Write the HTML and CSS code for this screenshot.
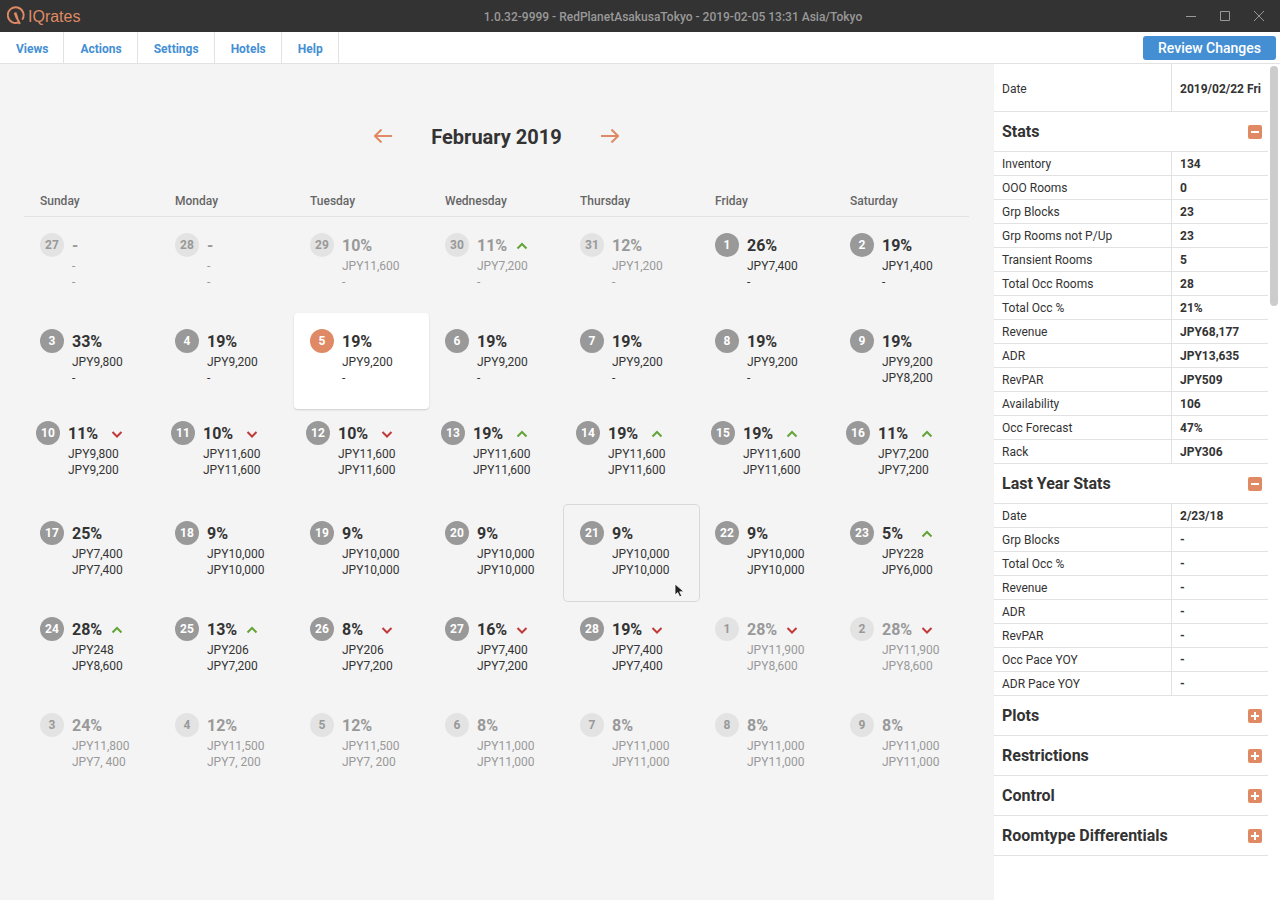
FILE: index.html
```html
<!DOCTYPE html>
<html lang="en">
<head>
<meta charset="utf-8">
<title>IQrates</title>
<link rel="stylesheet" href="styles.css">
</head>
<body>
<header class="titlebar">
  <div class="brand">
    <svg width="18" height="20" viewBox="0 0 18 20" fill="none" stroke="currentColor" aria-hidden="true"><path d="M12.200 16.200A7.900 7.900 0 1 1 15.200 13.600" stroke-width="1.900"/><path d="M8 6.500l2 5.500" stroke-width="2.600"/><path d="M9.700 11.500l3.200 6.500" stroke-width="2"/></svg>
    <span>IQrates</span>
  </div>
  <h1 class="window-title">1.0.32-9999 - RedPlanetAsakusaTokyo - 2019-02-05 13:31 Asia/Tokyo</h1>
  <div class="window-buttons">
    <button type="button" aria-label="Minimize"><svg width="10" height="10" viewBox="0 0 10 10"><path d="M0 5.500h10"/></svg></button>
    <button type="button" aria-label="Maximize"><svg width="10" height="10" viewBox="0 0 10 10"><path d="M.5.5h9v9h-9z"/></svg></button>
    <button type="button" aria-label="Close"><svg width="10" height="10" viewBox="0 0 10 10"><path d="M0 0l10 10M10 0L0 10"/></svg></button>
  </div>
</header>
<nav class="menubar">
  <a href="#views">Views</a><a href="#actions">Actions</a><a href="#settings">Settings</a><a href="#hotels">Hotels</a><a href="#help">Help</a>
  <button type="button" class="review">Review Changes</button>
</nav>
<div class="layout">
  <main class="calendar-pane">
    <div class="month-nav">
      <button type="button" aria-label="Previous month"><svg width="18" height="14" viewBox="0 0 18 14"><path d="M18 7H1M7.500.5L1 7l6.500 6.500"/></svg></button>
      <h2>February 2019</h2>
      <button type="button" aria-label="Next month"><svg width="18" height="14" viewBox="0 0 18 14"><path d="M0 7h17M10.500.5L17 7l-6.500 6.500"/></svg></button>
    </div>
    <table class="calendar">
      <thead><tr><th>Sunday</th><th>Monday</th><th>Tuesday</th><th>Wednesday</th><th>Thursday</th><th>Friday</th><th>Saturday</th></tr></thead>
      <tbody id="weeks"></tbody>
    </table>
  </main>
  <aside class="sidebar">
    <div class="details">
      <table class="stats date-row"><tr><th>Date</th><td>2019/02/22 Fri</td></tr></table>
      <h3>Stats <button type="button" class="toggle minus" aria-label="Collapse Stats"></button></h3>
      <table class="stats">
        <tr><th>Inventory</th><td>134</td></tr>
        <tr><th>OOO Rooms</th><td>0</td></tr>
        <tr><th>Grp Blocks</th><td>23</td></tr>
        <tr><th>Grp Rooms not P/Up</th><td>23</td></tr>
        <tr><th>Transient Rooms</th><td>5</td></tr>
        <tr><th>Total Occ Rooms</th><td>28</td></tr>
        <tr><th>Total Occ %</th><td>21%</td></tr>
        <tr><th>Revenue</th><td>JPY68,177</td></tr>
        <tr><th>ADR</th><td>JPY13,635</td></tr>
        <tr><th>RevPAR</th><td>JPY509</td></tr>
        <tr><th>Availability</th><td>106</td></tr>
        <tr><th>Occ Forecast</th><td>47%</td></tr>
        <tr><th>Rack</th><td>JPY306</td></tr>
      </table>
      <h3>Last Year Stats <button type="button" class="toggle minus" aria-label="Collapse Last Year Stats"></button></h3>
      <table class="stats">
        <tr><th>Date</th><td>2/23/18</td></tr>
        <tr><th>Grp Blocks</th><td>-</td></tr>
        <tr><th>Total Occ %</th><td>-</td></tr>
        <tr><th>Revenue</th><td>-</td></tr>
        <tr><th>ADR</th><td>-</td></tr>
        <tr><th>RevPAR</th><td>-</td></tr>
        <tr><th>Occ Pace YOY</th><td>-</td></tr>
        <tr><th>ADR Pace YOY</th><td>-</td></tr>
      </table>
      <h3>Plots <button type="button" class="toggle plus" aria-label="Expand Plots"></button></h3>
      <h3>Restrictions <button type="button" class="toggle plus" aria-label="Expand Restrictions"></button></h3>
      <h3>Control <button type="button" class="toggle plus" aria-label="Expand Control"></button></h3>
      <h3>Roomtype Differentials <button type="button" class="toggle plus" aria-label="Expand Roomtype Differentials"></button></h3>
    </div>
    <div class="scroll-track"><div class="scroll-thumb"></div></div>
  </aside>
</div>
<script src="calendar.js"></script>
</body>
</html>
```
FILE: styles.css
```css
* { box-sizing: border-box; }
body {
  margin: 0;
  min-height: 100vh;
  display: flex;
  flex-direction: column;
  font: 12px/16px Roboto, sans-serif;
  color: #333;
  background: #f4f4f4;
}
button { font: inherit; color: inherit; border: 0; padding: 0; background: none; }
h1, h2, h3 { margin: 0; }

.titlebar {
  height: 32px;
  display: grid;
  grid-template-columns: 1fr auto 1fr;
  align-items: center;
  background: #333;
  color: #999;
}
.brand {
  display: flex;
  align-items: center;
  gap: 3px;
  padding-left: 7px;
  color: #df8a64;
  font: 16px/20px "Liberation Sans", sans-serif;
}
.brand span { padding-top: 2px; }
.window-title { padding: 2px 0 0 66px; font-size: 12px; line-height: 16px; font-weight: 500; }
.window-buttons { display: flex; justify-content: flex-end; gap: 24px; padding-right: 16px; }
.window-buttons button { display: flex; }
.window-buttons svg { fill: none; stroke: #999; stroke-width: 1; }

.menubar {
  height: 32px;
  display: flex;
  align-items: stretch;
  background: #fff;
  border-bottom: 1px solid #e2e2e2;
}
.menubar a {
  display: flex;
  align-items: center;
  padding: 2px 15px 0 16px;
  border-right: 1px solid #e2e2e2;
  color: #448fd4;
  font-weight: 700;
  text-decoration: none;
}
.review {
  margin: 4px 4px 3px auto;
  padding: 0 15px;
  border-radius: 3px;
  background: #448fd4;
  color: #fff;
  font-size: 14px;
  font-weight: 500;
}

.layout { flex: 1; display: flex; }
.calendar-pane { flex: 1; min-width: 0; padding: 56px 25px 24px 24px; }
.month-nav { display: flex; justify-content: center; align-items: center; gap: 39px; height: 32px; }
.month-nav h2 { font-size: 20px; line-height: 24px; font-weight: 700; padding-top: 2px; }
.month-nav button { display: flex; }
.month-nav svg { fill: none; stroke: #df8a64; stroke-width: 2; }

.calendar { width: 100%; margin-top: 32px; table-layout: fixed; border-collapse: separate; border-spacing: 0; }
.calendar th {
  height: 33px;
  padding: 2px 16px 0;
  border-bottom: 1px solid #e2e2e2;
  color: #666;
  font-weight: 500;
  text-align: left;
}
.calendar td { height: 96px; padding: 0; }
.day {
  width: 100%;
  height: 96px;
  display: grid;
  grid-template-columns: 24px 32px 1fr;
  grid-template-rows: 25px 16px 16px;
  column-gap: 8px;
  align-content: start;
  padding: 16px 0 0 16px;
  border-radius: 4px;
  text-align: left;
  white-space: nowrap;
  position: relative;
}
.compact .day { padding: 12px 0 0 12px; grid-template-columns: 24px 36px 1fr; }
.num {
  height: 24px;
  border-radius: 50%;
  background: #999;
  color: #fff;
  font-weight: 700;
  line-height: 25px;
  text-align: center;
}
.pct { font-size: 16px; line-height: 25px; font-weight: 700; }
.price { grid-column: 2 / 4; line-height: 17px; }
.trend { width: 12px; height: 8px; align-self: center; margin-left: -1px; fill: none; stroke-width: 2; }
.trend.up { stroke: #64a338; }
.trend.down { stroke: #c03a3a; }
.other { color: #999; }
.other .num { background: #e3e3e3; color: #999; }
.today { background: #fff; box-shadow: 0 1px 2px rgba(0, 0, 0, .16); }
.today .num { background: #df8a64; }
.hovered { box-shadow: 0 0 0 1px #d8d8d8; }
.pointer { position: absolute; left: 110px; top: 78px; overflow: visible; }

.sidebar { width: 286px; display: flex; background: #fff; }
.details { flex: 1; }
.stats { width: 100%; table-layout: fixed; border-collapse: separate; border-spacing: 0; }
.stats th, .stats td { height: 24px; padding: 1px 8px 0; border-bottom: 1px solid #e2e2e2; text-align: left; }
.stats th { font-weight: 400; }
.stats td { width: 97px; border-left: 1px solid #e2e2e2; font-weight: 700; white-space: nowrap; }
.date-row th, .date-row td { height: 48px; padding-top: 2px; }
.details h3 {
  height: 40px;
  display: flex;
  align-items: center;
  justify-content: space-between;
  padding: 0 6px 0 8px;
  border-bottom: 1px solid #e2e2e2;
  font-size: 16px;
  line-height: 26px;
  font-weight: 700;
}
.toggle {
  width: 14px;
  height: 14px;
  border-radius: 2px;
  background: linear-gradient(#fff, #fff) center / 8px 2px no-repeat, #df8a64;
}
.toggle.plus {
  background: linear-gradient(#fff, #fff) center / 8px 2px no-repeat, linear-gradient(#fff, #fff) center / 2px 8px no-repeat, #df8a64;
}
.scroll-track { width: 12px; padding: 2px; }
.scroll-thumb { height: 240px; border-radius: 4px; background: #ccc; }
```
FILE: calendar.js
```js
// Each entry: day, occupancy, first rate, second rate, trend ("u", "d" or empty)
const weeks = [
  ["27|-|-|-|", "28|-|-|-|", "29|10%|JPY11,600|-|", "30|11%|JPY7,200|-|u", "31|12%|JPY1,200|-|", "1|26%|JPY7,400|-|", "2|19%|JPY1,400|-|"],
  ["3|33%|JPY9,800|-|", "4|19%|JPY9,200|-|", "5|19%|JPY9,200|-|", "6|19%|JPY9,200|-|", "7|19%|JPY9,200|-|", "8|19%|JPY9,200|-|", "9|19%|JPY9,200|JPY8,200|"],
  ["10|11%|JPY9,800|JPY9,200|d", "11|10%|JPY11,600|JPY11,600|d", "12|10%|JPY11,600|JPY11,600|d", "13|19%|JPY11,600|JPY11,600|u", "14|19%|JPY11,600|JPY11,600|u", "15|19%|JPY11,600|JPY11,600|u", "16|11%|JPY7,200|JPY7,200|u"],
  ["17|25%|JPY7,400|JPY7,400|", "18|9%|JPY10,000|JPY10,000|", "19|9%|JPY10,000|JPY10,000|", "20|9%|JPY10,000|JPY10,000|", "21|9%|JPY10,000|JPY10,000|", "22|9%|JPY10,000|JPY10,000|", "23|5%|JPY228|JPY6,000|u"],
  ["24|28%|JPY248|JPY8,600|u", "25|13%|JPY206|JPY7,200|u", "26|8%|JPY206|JPY7,200|d", "27|16%|JPY7,400|JPY7,200|d", "28|19%|JPY7,400|JPY7,400|d", "1|28%|JPY11,900|JPY8,600|d", "2|28%|JPY11,900|JPY8,600|d"],
  ["3|24%|JPY11,800|JPY7, 400|", "4|12%|JPY11,500|JPY7, 200|", "5|12%|JPY11,500|JPY7, 200|", "6|8%|JPY11,000|JPY11,000|", "7|8%|JPY11,000|JPY11,000|", "8|8%|JPY11,000|JPY11,000|", "9|8%|JPY11,000|JPY11,000|"]
];
const trends = {
  u: '<svg class="trend up" viewBox="0 0 12 8"><path d="M1.500 6.500L6 2l4.500 4.500"/></svg>',
  d: '<svg class="trend down" viewBox="0 0 12 8"><path d="M1.500 2L6 6.500 10.500 2"/></svg>'
};
const pointer = '<svg class="pointer" width="12" height="16" viewBox="0 0 12 16"><path d="M1 1v11l2.700-2.400 2 4.200 2-1-2-4H10z" fill="#222" stroke="#fff" stroke-width=".8"/></svg>';

document.getElementById("weeks").innerHTML = weeks.map((week, w) =>
  `<tr class="${w === 2 ? "compact" : ""}">` + week.map((entry, d) => {
    const [num, pct, rate1, rate2, trend] = entry.split("|");
    const index = w * 7 + d;
    const state = index < 5 || index > 32 ? "other" : index === 9 ? "today" : index === 25 ? "hovered" : "";
    return `<td><button type="button" class="day ${state}"><span class="num">${num}</span><span class="pct">${pct}</span>${trends[trend] || ""}<span class="price">${rate1}</span><span class="price">${rate2}</span>${state === "hovered" ? pointer : ""}</button></td>`;
  }).join("") + "</tr>"
).join("");
```
